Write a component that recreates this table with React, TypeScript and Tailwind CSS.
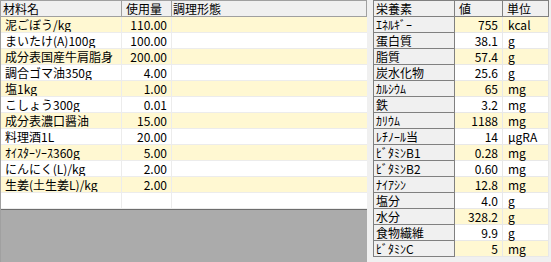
import React from 'react';

const materials = [
  { name: '泥ごぼう/kg', qty: '110.00' },
  { name: 'まいたけ(A)100g', qty: '100.00' },
  { name: '成分表国産牛肩脂身', qty: '200.00' },
  { name: '調合ゴマ油350g', qty: '4.00' },
  { name: '塩1kg', qty: '1.00' },
  { name: 'こしょう300g', qty: '0.01' },
  { name: '成分表濃口醤油', qty: '15.00' },
  { name: '料理酒1L', qty: '20.00' },
  { name: 'ｵｲｽﾀｰｿｰｽ360g', qty: '5.00' },
  { name: 'にんにく(L)/kg', qty: '2.00' },
  { name: '生姜(土生姜L)/kg', qty: '2.00' },
  { name: '', qty: '' },
];

const nutrients = [
  ['ｴﾈﾙｷﾞｰ', '755', 'kcal'],
  ['蛋白質', '38.1', 'g'],
  ['脂質', '57.4', 'g'],
  ['炭水化物', '25.6', 'g'],
  ['ｶﾙｼｳﾑ', '65', 'mg'],
  ['鉄', '3.2', 'mg'],
  ['ｶﾘｳﾑ', '1188', 'mg'],
  ['ﾚﾁﾉｰﾙ当', '14', 'μgRA'],
  ['ﾋﾞﾀﾐﾝB1', '0.28', 'mg'],
  ['ﾋﾞﾀﾐﾝB2', '0.60', 'mg'],
  ['ﾅｲｱｼﾝ', '12.8', 'mg'],
  ['塩分', '4.0', 'g'],
  ['水分', '328.2', 'g'],
  ['食物繊維', '9.9', 'g'],
  ['ﾋﾞﾀﾐﾝC', '5', 'mg'],
];

export default function App() {
  return (
    <div
      className="w-[551px] h-[262px] bg-[#f0f0f0] flex text-[12px] leading-[15px] text-black overflow-hidden"
      style={{ fontFamily: '"Noto Sans CJK JP", "Liberation Sans", sans-serif' }}
    >
      {/* Left: ingredients grid */}
      <div className="w-[367px] h-full flex flex-col border-l border-[#a0a0a0]">
        <div className="flex h-[17px] bg-[#f0f0f0] border-t border-b border-[#a0a0a0] border-r">
          <div className="w-[121px] pl-[2px] border-r border-[#a0a0a0]">材料名</div>
          <div className="w-[50px] pl-[4px] border-r border-[#a0a0a0]">使用量</div>
          <div className="flex-1 pl-[1px]">調理形態</div>
        </div>
        {materials.map((m, i) => (
          <div
            key={i}
            className={`flex h-[16px] border-b border-[#ececec] ${i % 2 === 0 && m.name ? 'bg-[#fff8d2]' : 'bg-white'}`}
          >
            <div className="w-[121px] pl-[4px] border-r border-[#ececec] whitespace-nowrap overflow-hidden">{m.name}</div>
            <div className="w-[50px] pr-[4px] text-right border-r border-[#ececec]">{m.qty}</div>
            <div className="flex-1"></div>
          </div>
        ))}
        <div className="flex-1 bg-[#ababab] border-t border-[#6d6d6d]"></div>
      </div>

      <div className="w-[6px]"></div>

      {/* Right: nutrients grid */}
      <div className="w-[176px] h-full flex flex-col">
        <div className="flex h-[17px] border border-[#808080] bg-[#f0f0f0]">
          <div className="w-[81px] pl-[2px] border-r border-[#808080]">栄養素</div>
          <div className="w-[48px] pl-[4px] border-r border-[#808080]">値</div>
          <div className="flex-1 pl-[4px]">単位</div>
        </div>
        {nutrients.map(([n, v, u], i) => (
          <div key={i} className="flex h-[16px] border-l border-[#808080]">
            <div className="w-[81px] pl-[2px] bg-[#f0f0f0] border-r border-b border-[#808080] whitespace-nowrap">{n}</div>
            <div
              className={`flex h-full flex-1 border-b border-r border-[#e8e8e8] ${i % 2 === 0 ? 'bg-[#fff8d2]' : 'bg-white'}`}
            >
              <div className="w-[48px] pr-[4px] text-right border-r border-[#e8e8e8]">{v}</div>
              <div className="flex-1 pl-[5px]">{u}</div>
            </div>
          </div>
        ))}
      </div>
    </div>
  );
}
